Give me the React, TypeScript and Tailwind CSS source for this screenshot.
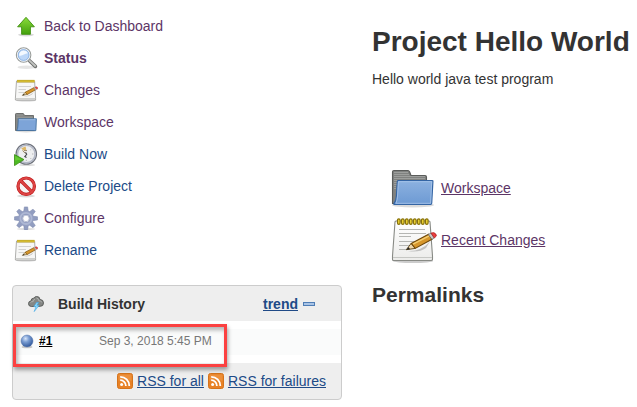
import { ReactNode } from 'react';

type Task = {
  label: string;
  icon: ReactNode;
  color: string;
  active?: boolean;
};

function UpIcon() {
  return (
    <svg viewBox="0 0 24 24" className="size-6" aria-hidden="true">
      <defs>
        <linearGradient id="up" x1="0" y1="0" x2="0" y2="1">
          <stop offset="0" stopColor="#8bdc3c" />
          <stop offset="1" stopColor="#43a00c" />
        </linearGradient>
      </defs>
      <ellipse cx="12" cy="20.8" rx="8" ry="1.6" fill="#000" opacity=".15" />
      <path
        d="M12 3.3 20.4 12.8H16.4V20.3H7.6V12.8H3.6Z"
        fill="url(#up)"
        stroke="#3f8f10"
        strokeWidth=".9"
        strokeLinejoin="round"
      />
    </svg>
  );
}

function SearchIcon() {
  return (
    <svg viewBox="0 0 24 24" className="size-6" aria-hidden="true">
      <ellipse cx="12.5" cy="21.3" rx="9" ry="1.7" fill="#000" opacity=".1" />
      <path d="M15.5 14.7 21.4 20.4" stroke="#707270" strokeWidth="3.6" strokeLinecap="round" />
      <path d="M15.5 14.7 21.2 20" stroke="#c2c4c1" strokeWidth="1.8" strokeLinecap="round" />
      <circle cx="9.6" cy="9" r="7.2" fill="#cbdff7" stroke="#9a9d9a" strokeWidth="1.2" />
      <circle cx="9.6" cy="9" r="6.2" fill="#bdd7f8" stroke="#f4f4f4" strokeWidth="1" />
      <path d="M5 9.4C5.1 6.2 7.3 4.4 9.6 4.4S13.4 5.6 13.9 7.2C10.7 6.9 8.2 10.7 5 9.4Z" fill="#f4f9ff" />
      <circle cx="9.6" cy="9" r="5.4" fill="none" stroke="#85addf" strokeWidth=".8" />
    </svg>
  );
}

function NotepadIcon() {
  return (
    <svg viewBox="0 0 24 24" className="size-6" aria-hidden="true">
      <ellipse cx="12" cy="22.4" rx="10" ry="1.2" fill="#000" opacity=".18" />
      <path d="M2.5 3H20.6L21.6 20V22H1.4V20Z" fill="#f7f7f6" stroke="#9a9b98" strokeWidth=".8" />
      <path d="M1.8 20.5H21.2" stroke="#cfd0cd" strokeWidth="1" />
      <path d="M4.5 8.5H17M4.5 11.5H12M4.5 14.5H10" stroke="#d2d3d1" strokeWidth="1" />
      <path d="M3 3.2H20.5" stroke="#a88f18" strokeWidth="2.6" />
      <path d="M3.4 3.2H20.5" stroke="#f0d843" strokeWidth="1.8" strokeDasharray="1.2 .8" />
      <path d="M9.5 18Q16 18.3 20 13.5L18 16.5Q14 19.3 9.5 18Z" fill="#000" opacity=".2" />
      <path d="M8.4 17.4 11.3 14.1 13.2 16.4Z" fill="#ead2a0" stroke="#6b501c" strokeWidth=".6" />
      <path d="M8.4 17.4 9.8 15.9 10.6 16.9Z" fill="#222" />
      <path d="M11.2 14.2 19.8 9.7 21.6 11.8 13.2 16.5Z" fill="#d6962b" stroke="#80530f" strokeWidth=".7" />
      <path d="M19.8 9.7 21 9.1 22.7 11.3 21.6 11.9Z" fill="#c9cbc8" stroke="#888" strokeWidth=".4" />
      <path d="M21 9.1Q22.8 8.3 23.6 9.5T22.7 11.3Z" fill="#e84545" stroke="#b03030" strokeWidth=".4" />
    </svg>
  );
}

function NotepadLargeIcon() {
  return (
    <svg viewBox="0 0 48 48" className="size-12" aria-hidden="true">
      <defs>
        <linearGradient id="pad" x1="0" y1="0" x2="0" y2="1">
          <stop offset="0" stopColor="#fff" />
          <stop offset="1" stopColor="#ececea" />
        </linearGradient>
      </defs>
      <ellipse cx="24" cy="45" rx="20" ry="2" fill="#000" opacity=".2" />
      <path
        d="M7 5H40Q41 5 41 6L43.5 40V43.5Q43.5 44.5 42 44.5H4.5Q3.5 44.5 3.5 43.5V40L6 6Q6 5 7 5Z"
        fill="url(#pad)"
        stroke="#888a85"
        strokeWidth="1.1"
      />
      <path d="M4 41.5H43" stroke="#c6c7c4" strokeWidth="1" />
      <path d="M10 13.5H36M10 17.5H37M10 20.5H22M10 25.5H31M10 29.5H22M10 33.5H17" stroke="#b5b6b3" strokeWidth="1.1" />
      <g fill="#f2d835" stroke="#86700a" strokeWidth="1.2">
        <rect x="8.5" y="2.8" width="2.6" height="5.6" rx="1.3" />
        <rect x="12.5" y="2.8" width="2.6" height="5.6" rx="1.3" />
        <rect x="16.5" y="2.8" width="2.6" height="5.6" rx="1.3" />
        <rect x="20.5" y="2.8" width="2.6" height="5.6" rx="1.3" />
        <rect x="24.5" y="2.8" width="2.6" height="5.6" rx="1.3" />
        <rect x="28.5" y="2.8" width="2.6" height="5.6" rx="1.3" />
        <rect x="32.5" y="2.8" width="2.6" height="5.6" rx="1.3" />
        <rect x="36.5" y="2.8" width="2.6" height="5.6" rx="1.3" />
      </g>
      <path d="M19 35Q32 35.5 41 25.5L37 32Q30 37 19 35Z" fill="#000" opacity=".2" />
      <path d="M17.3 33.7 22.3 27.2 26.2 32.4Z" fill="#efd8ad" stroke="#5c4312" strokeWidth=".9" />
      <path d="M17.3 33.7 19.4 31 21.2 33.2Z" fill="#222" />
      <path d="M22.2 27.4 39.6 18.3 43 23.2 26.2 32.4Z" fill="#d6962b" stroke="#6d470b" strokeWidth="1.1" />
      <path d="M24 28.2 40.2 19.8" stroke="#f4ce72" strokeWidth="1.3" />
      <path d="M39.3 18.5 42 17.1 45.3 22 42.9 23.3Z" fill="#c9cbc8" stroke="#666" strokeWidth=".7" />
      <path d="M42 17.1Q45 15.8 46.8 18T45.3 22Z" fill="#ec3e3e" stroke="#a62121" strokeWidth=".7" />
    </svg>
  );
}

function FolderIcon() {
  return (
    <svg viewBox="0 0 24 24" className="size-6" aria-hidden="true">
      <ellipse cx="12" cy="21.2" rx="10" ry="1.2" fill="#000" opacity=".14" />
      <path d="M1.5 20.5V4.2Q1.5 3.5 2.3 3.5H9.3L10.6 5.5H19.5V20.5Z" fill="#858785" stroke="#636563" strokeWidth=".9" />
      <path d="M2.5 5H9M2.5 7.3H18.5" stroke="#a0a2a0" strokeWidth=".7" />
      <path d="M4.3 8.8H22.4L21.9 20.5H2.6Q3.8 19 3.9 16Z" fill="#7da4d8" stroke="#44719f" strokeWidth=".9" />
      <path d="M4.8 9.7H21.4" stroke="#a5c1e5" strokeWidth=".8" />
    </svg>
  );
}

function FolderLargeIcon() {
  return (
    <svg viewBox="0 0 48 48" className="size-12" aria-hidden="true">
      <defs>
        <linearGradient id="folder" x1="0" y1="0" x2="0" y2="1">
          <stop offset="0" stopColor="#8cb1e0" />
          <stop offset="1" stopColor="#6d9ad3" />
        </linearGradient>
      </defs>
      <ellipse cx="24" cy="41" rx="21" ry="2.5" fill="#000" opacity=".14" />
      <path
        d="M3.5 39.5V7.8Q3.5 6.5 5 6.5H19Q20 6.5 20.7 8L22 11.5H36Q37.5 11.5 37.5 13V39.5Z"
        fill="#808280"
        stroke="#5a5c5a"
        strokeWidth="1.1"
      />
      <path d="M5 8.5H19M5 10.5H20M5 12.5H36M5 14.5H36M5 16.5H8M5 18.5H8M5 20.5H8M5 22.5H7M5 24.5H7" stroke="#a5a7a5" strokeWidth=".8" />
      <path
        d="M9.3 16.5H43Q44 16.5 43.9 17.5L42.7 39.3Q42.6 40.5 41.5 40.5H5.5Q4.5 40.5 5 39.5Q7.1 37 7.4 32L8.3 17.5Q8.4 16.5 9.3 16.5Z"
        fill="url(#folder)"
        stroke="#3465a4"
        strokeWidth="1.2"
      />
      <path d="M9.4 17.7H42.7L41.6 39.3H7Q8.4 36 8.6 31Z" fill="none" stroke="#a9c5e8" strokeWidth=".8" />
    </svg>
  );
}

function ClockIcon() {
  return (
    <svg viewBox="0 0 24 24" className="size-6" aria-hidden="true">
      <ellipse cx="13" cy="23" rx="8" ry="1" fill="#000" opacity=".15" />
      <circle cx="12.3" cy="12" r="10.2" fill="#eeeff0" stroke="#70747e" strokeWidth="1.2" />
      <circle cx="12.3" cy="12" r="8.8" fill="none" stroke="#b4b9c8" strokeWidth="1.6" />
      <path d="M19.3 12H18M12.3 19V17.8M17.3 7 16.4 7.9M17.3 17 16.4 16.1" stroke="#a4a7ac" strokeWidth=".8" />
      <path d="M7.2 6.2 11.6 4.4 12.3 7.8 9.3 8.4Z" fill="#deb765" />
      <path d="M8.5 8.6 11.5 11.5M10 8.6H13" stroke="#8d7a54" strokeWidth=".9" />
      <path d="M11.5 10.2 12.7 12.3 10.8 14.6 12.5 15.5" fill="none" stroke="#44474b" strokeWidth="1.1" />
      <path d="M.5 12.6 10 17.6.5 23.6Z" fill="#4cba22" stroke="#398a12" strokeWidth=".8" />
      <path d="M1.2 14 7.8 17.5 1.2 18.4Z" fill="#73d33b" opacity=".7" />
    </svg>
  );
}

function DeleteIcon() {
  return (
    <svg viewBox="0 0 24 24" className="size-6" aria-hidden="true">
      <ellipse cx="12" cy="22" rx="9" ry="1.4" fill="#000" opacity=".14" />
      <circle cx="12.2" cy="12.2" r="8.2" fill="#f6f4f4" stroke="#bd1515" strokeWidth="3.2" />
      <path d="M6.5 6.5 17.9 17.9" stroke="#bd1515" strokeWidth="3.2" />
      <path d="M6.5 6.5 17.9 17.9" stroke="#dd4444" strokeWidth="2" />
      <circle cx="12.2" cy="12.2" r="8.2" fill="none" stroke="#dd4444" strokeWidth="2" />
    </svg>
  );
}

function GearIcon() {
  return (
    <svg viewBox="0 0 24 24" className="size-6" aria-hidden="true">
      <ellipse cx="12" cy="23" rx="9" ry="1" fill="#000" opacity=".13" />
      <g fill="#919dc0" stroke="#7985a9" strokeWidth=".5">
        {[0, 45, 90, 135, 180, 225, 270, 315].map((angle) => (
          <path key={angle} d="M9.6 6 10.4.9H13.6L14.4 6Z" transform={`rotate(${angle} 12 12.4)`} />
        ))}
      </g>
      <circle cx="12" cy="12.4" r="5.6" fill="none" stroke="#949fc2" strokeWidth="4.4" />
      <circle cx="12" cy="12.4" r="5.6" fill="none" stroke="#aeb8d4" strokeWidth="1.8" />
      <circle cx="12" cy="12.4" r="3.2" fill="#fff" stroke="#7985a9" strokeWidth=".5" />
    </svg>
  );
}

function StormIcon() {
  return (
    <svg viewBox="0 0 16 16" className="size-4" aria-hidden="true">
      <path
        d="M3.3 10.5Q.5 10.3.5 7.7T3 5Q3 2.2 5.7 2.2 6.6.5 8.8.5 11.8.5 12 3.5 15.5 3.6 15.5 7T12.3 10.3Z"
        fill="#858785"
        stroke="#565856"
        strokeWidth=".9"
      />
      <path d="M2.5 6.4Q4 5 5 5.8 5 3.5 7 3.4M8.4 2Q10.6 2 10.7 4.7 13.4 4.4 13.8 6.5" fill="none" stroke="#b0b2b0" strokeWidth="1" />
      <path d="M8.6 6.5 5.8 10.7H8L6.2 15.6 11.1 9.3H8.8L10.6 6.5Z" fill="#8fdcff" stroke="#3aa5e5" strokeWidth=".6" />
    </svg>
  );
}

function BallIcon() {
  return (
    <svg viewBox="0 0 16 16" className="size-4" aria-hidden="true">
      <defs>
        <radialGradient id="ball" cx=".38" cy=".3" r=".7">
          <stop offset="0" stopColor="#d8e6fa" />
          <stop offset=".4" stopColor="#7c9fd4" />
          <stop offset="1" stopColor="#335a9c" />
        </radialGradient>
      </defs>
      <ellipse cx="8" cy="14" rx="5.5" ry="1.3" fill="#000" opacity=".2" />
      <circle cx="8" cy="8" r="6" fill="url(#ball)" stroke="#5475ab" strokeWidth=".5" />
    </svg>
  );
}

function RssIcon() {
  return (
    <svg viewBox="0 0 16 16" className="size-4 shrink-0" aria-hidden="true">
      <rect x=".5" y=".5" width="15" height="15" rx="2" fill="#e88125" stroke="#d5731a" />
      <path d="M1.5 1.5H14.5V8Q8 5 1.5 8Z" fill="#f0a052" opacity=".5" />
      <circle cx="4.6" cy="11.5" r="1.5" fill="#fff" />
      <path d="M3.2 7.2A5.7 5.7 0 0 1 8.9 12.9M3.2 3.8A9.1 9.1 0 0 1 12.3 12.9" fill="none" stroke="#fff" strokeWidth="1.8" />
    </svg>
  );
}

const tasks: Task[] = [
  { label: 'Back to Dashboard', icon: <UpIcon />, color: 'text-[#5c3566]' },
  { label: 'Status', icon: <SearchIcon />, color: 'text-[#5c3566]', active: true },
  { label: 'Changes', icon: <NotepadIcon />, color: 'text-[#5c3566]' },
  { label: 'Workspace', icon: <FolderIcon />, color: 'text-[#5c3566]' },
  { label: 'Build Now', icon: <ClockIcon />, color: 'text-[#204a87]' },
  { label: 'Delete Project', icon: <DeleteIcon />, color: 'text-[#204a87]' },
  { label: 'Configure', icon: <GearIcon />, color: 'text-[#5c3566]' },
  { label: 'Rename', icon: <NotepadIcon />, color: 'text-[#204a87]' },
];

function TaskList() {
  return (
    <nav>
      <ul>
        {tasks.map((task) => (
          <li key={task.label}>
            <a
              href="#"
              className={`flex h-8 items-center gap-1.5 pl-0.5 ${task.color} ${task.active ? 'font-bold' : ''}`}
            >
              {task.icon}
              {task.label}
            </a>
          </li>
        ))}
      </ul>
    </nav>
  );
}

function BuildHistory() {
  return (
    <section className="mt-[19px] rounded border border-[#ccc] bg-[#eee]">
      <header className="flex h-[35px] items-center pr-[26px] pl-[15px]">
        <StormIcon />
        <h2 className="ml-[14px] font-bold">Build History</h2>
        <a href="#" className="ml-auto font-bold text-[#204a87] underline">
          trend
        </a>
        <button type="button" aria-label="Collapse" className="ml-[5px] h-1 w-3 border border-[#4f7db5] bg-[#a9c4e6]" />
      </header>

      <div className="relative bg-white py-2">
        <table className="w-full text-xs">
          <tbody>
            <tr className="h-[26px] bg-[#fafbfb] align-top">
              <td className="w-[86px] pt-1 pl-1.5">
                <span className="flex items-center gap-1">
                  <BallIcon />
                  <a href="#" className="font-bold text-black underline">
                    #1
                  </a>
                </span>
              </td>
              <td className="pt-1 text-[#777]">Sep 3, 2018 5:45 PM</td>
            </tr>
          </tbody>
        </table>
        {/* highlight frame over the latest build */}
        <div className="pointer-events-none absolute top-[3px] left-0 h-[43px] w-[214px] border-3 border-[#fb4141] shadow-[1px_3px_4px_rgba(0,0,0,0.35),inset_2px_3px_4px_rgba(0,0,0,0.3)]" />
      </div>

      <footer className="flex h-9 items-center justify-end gap-1 pr-[15px] text-[#204a87]">
        <RssIcon />
        <a href="#" className="underline">
          RSS for all
        </a>
        <RssIcon />
        <a href="#" className="underline">
          RSS for failures
        </a>
      </footer>
    </section>
  );
}

export default function App() {
  return (
    <div className="flex min-h-screen gap-[30px] bg-white px-3 font-['Liberation_Sans',Arial,sans-serif] text-sm text-[#333]">
      <aside className="w-[330px] shrink-0 pt-2.5">
        <TaskList />
        <BuildHistory />
      </aside>

      <main className="-mr-3 min-w-0 flex-1 pt-6">
        <h1 className="text-[28px] leading-9 font-bold whitespace-nowrap">Project Hello World</h1>
        <p className="mt-[9px]">Hello world java test program</p>

        <ul className="mt-[73px] ml-[17px] text-[#5c3566]">
          <li className="flex h-[52px] items-center gap-1">
            <FolderLargeIcon />
            <a href="#" className="underline">
              Workspace
            </a>
          </li>
          <li className="flex h-[52px] items-center gap-1">
            <NotepadLargeIcon />
            <a href="#" className="underline">
              Recent Changes
            </a>
          </li>
        </ul>

        <h2 className="mt-[15px] text-[21px] leading-7 font-bold">Permalinks</h2>
      </main>
    </div>
  );
}
